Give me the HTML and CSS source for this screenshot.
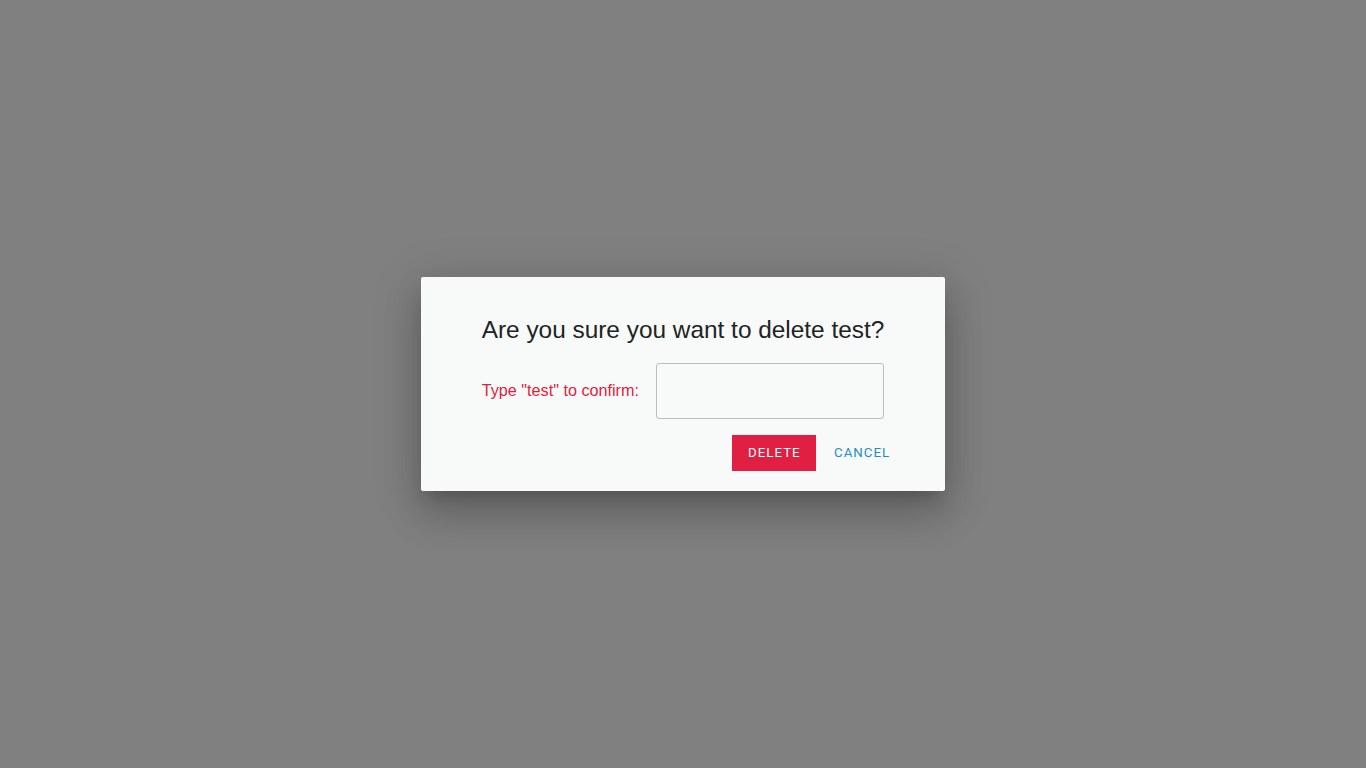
FILE: index.html
```html
<!DOCTYPE html>
<html lang="en">
<head>
<meta charset="utf-8">
<title>Delete</title>
<link rel="stylesheet" href="styles.css">
</head>
<body>
<div class="overlay">
  <div class="dialog">
    <h2 class="title">Are you sure you want to delete test?</h2>
    <div class="confirm-row">
      <label class="confirm-label" for="confirm">Type "test" to confirm:</label>
      <input class="confirm-input" id="confirm" type="text">
    </div>
    <div class="actions">
      <button class="btn btn-danger">Delete</button>
      <button class="btn btn-text">Cancel</button>
    </div>
  </div>
</div>
</body>
</html>
```
FILE: styles.css
```css
html, body {
  margin: 0;
  padding: 0;
  height: 100%;
}
body {
  font-family: "Liberation Sans", Arial, sans-serif;
  background: #7f807f;
}
.overlay {
  height: 100vh;
  display: flex;
  align-items: center;
  justify-content: center;
}
.dialog {
  width: 444px;
  padding: 39px 40px 20px;
  background: #f8faf9;
  border-radius: 2px;
  box-shadow: 0 11px 15px -7px rgba(0,0,0,.2), 0 24px 38px 3px rgba(0,0,0,.14), 0 9px 46px 8px rgba(0,0,0,.12);
}
.title {
  margin: 0;
  font-size: 24.4px;
  font-weight: normal;
  line-height: 27px;
  color: #222324;
  text-align: center;
}
.confirm-row {
  margin-top: 20px;
  padding-right: 21px;
  display: flex;
  align-items: center;
  justify-content: flex-end;
  gap: 17px;
}
.confirm-label {
  font-size: 16.2px;
  line-height: 18px;
  padding-bottom: 2px;
  color: #e0223f;
}
.confirm-input {
  box-sizing: border-box;
  width: 228px;
  height: 56px;
  margin: 0;
  border: 1px solid #bdbdbd;
  border-radius: 3px;
  background: #f8faf9;
  font-family: inherit;
  font-size: 16px;
  padding: 0 12px;
  outline: none;
}
.actions {
  margin-top: 16px;
  display: flex;
  justify-content: flex-end;
  gap: 2px;
}
.btn {
  height: 36px;
  padding: 0 16px 2px;
  border: none;
  border-radius: 0;
  font-family: Roboto, "Liberation Sans", sans-serif;
  font-weight: 400;
  font-size: 13.3px;
  letter-spacing: 1px;
  text-transform: uppercase;
  cursor: pointer;
}
.btn-danger {
  width: 84px;
  background: #e01f42;
  color: #fff;
}
.btn-text {
  width: 87px;
  padding-right: 18px;
  background: transparent;
  color: #1e8ccc;
}
```
